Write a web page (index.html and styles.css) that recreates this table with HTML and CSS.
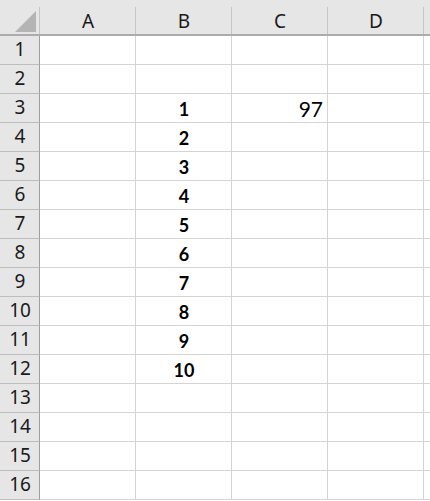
FILE: index.html
```html
<!DOCTYPE html>
<html>
<head>
<meta charset="utf-8">
<link rel="stylesheet" href="styles.css">
</head>
<body>
<div class="sheet">
  <div class="hdr corner"><svg class="tri" width="39" height="34" viewBox="0 0 39 34"><polygon points="36,11 36,32 15,32" fill="#b4b4b4"/></svg></div>
  <div class="hdr col">A</div>
  <div class="hdr col">B</div>
  <div class="hdr col">C</div>
  <div class="hdr col">D</div>
  <div class="hdr col end"></div>

  <div class="rh">1</div><div class="c"></div><div class="c"></div><div class="c"></div><div class="c"></div><div class="c e"></div>
  <div class="rh">2</div><div class="c"></div><div class="c"></div><div class="c"></div><div class="c"></div><div class="c e"></div>
  <div class="rh">3</div><div class="c"></div><div class="c b">1</div><div class="c n">97</div><div class="c"></div><div class="c e"></div>
  <div class="rh">4</div><div class="c"></div><div class="c b">2</div><div class="c"></div><div class="c"></div><div class="c e"></div>
  <div class="rh">5</div><div class="c"></div><div class="c b">3</div><div class="c"></div><div class="c"></div><div class="c e"></div>
  <div class="rh">6</div><div class="c"></div><div class="c b">4</div><div class="c"></div><div class="c"></div><div class="c e"></div>
  <div class="rh">7</div><div class="c"></div><div class="c b">5</div><div class="c"></div><div class="c"></div><div class="c e"></div>
  <div class="rh">8</div><div class="c"></div><div class="c b">6</div><div class="c"></div><div class="c"></div><div class="c e"></div>
  <div class="rh">9</div><div class="c"></div><div class="c b">7</div><div class="c"></div><div class="c"></div><div class="c e"></div>
  <div class="rh">10</div><div class="c"></div><div class="c b">8</div><div class="c"></div><div class="c"></div><div class="c e"></div>
  <div class="rh">11</div><div class="c"></div><div class="c b">9</div><div class="c"></div><div class="c"></div><div class="c e"></div>
  <div class="rh">12</div><div class="c"></div><div class="c b">10</div><div class="c"></div><div class="c"></div><div class="c e"></div>
  <div class="rh">13</div><div class="c"></div><div class="c"></div><div class="c"></div><div class="c"></div><div class="c e"></div>
  <div class="rh">14</div><div class="c"></div><div class="c"></div><div class="c"></div><div class="c"></div><div class="c e"></div>
  <div class="rh">15</div><div class="c"></div><div class="c"></div><div class="c"></div><div class="c"></div><div class="c e"></div>
  <div class="rh">16</div><div class="c"></div><div class="c"></div><div class="c"></div><div class="c"></div><div class="c e"></div>
</div>
</body>
</html>
```
FILE: styles.css
```css
html, body {
  margin: 0;
  padding: 0;
  background: #ffffff;
}
.sheet {
  display: grid;
  grid-template-columns: 40px repeat(4, 96px) 1fr;
  grid-template-rows: 36px repeat(16, 29px);
  width: 430px;
  overflow: hidden;
}
.hdr {
  box-sizing: border-box;
  background-color: #e6e6e6;
  background-image: linear-gradient(#c6c6c6, #c6c6c6);
  background-size: 1px 27px;
  background-position: right 7px;
  background-repeat: no-repeat;
  border-bottom: 2px solid #ababab;
  font-family: "Noto Sans", "Open Sans", sans-serif;
  font-size: 19px;
  line-height: 19px;
  color: #1a1a1a;
  text-align: center;
  padding-top: 12px;
}
.corner {
  padding: 0;
  position: relative;
}
.tri {
  display: block;
}
.end {
  background-image: none;
}
.rh {
  box-sizing: border-box;
  background: #e6e6e6;
  border-right: 1px solid #9e9e9e;
  border-bottom: 1px solid #bdbdbd;
  font-family: "Noto Sans", "Open Sans", sans-serif;
  font-size: 19px;
  line-height: 19px;
  color: #1a1a1a;
  text-align: center;
  padding-top: 4px;
  padding-left: 1px;
}
.c {
  box-sizing: border-box;
  border-right: 1px solid #d4d4d4;
  border-bottom: 1px solid #d4d4d4;
  font-family: Lato, "Open Sans", sans-serif;
  color: #000;
}
.c.e {
  border-right: none;
}
.b {
  font-weight: 700;
  font-size: 18px;
  line-height: 18px;
  text-align: center;
  padding-top: 6px;
  padding-left: 1px;
}
.n {
  font-size: 21px;
  line-height: 21px;
  text-align: right;
  padding-top: 4px;
  padding-right: 4px;
}
```
